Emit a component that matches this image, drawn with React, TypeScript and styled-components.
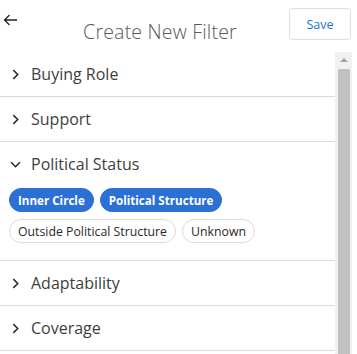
import styled, { createGlobalStyle } from 'styled-components';

const GlobalStyle = createGlobalStyle`
  html, body {
    margin: 0;
    padding: 0;
    background: #ffffff;
    font-family: 'Open Sans', 'Liberation Sans', sans-serif;
    color: #3e3e3c;
  }
`;

interface Section {
  label: string;
  open?: boolean;
  options?: { label: string; selected?: boolean }[];
}

const sections: Section[] = [
  { label: 'Buying Role' },
  { label: 'Support' },
  {
    label: 'Political Status',
    open: true,
    options: [
      { label: 'Inner Circle', selected: true },
      { label: 'Political Structure', selected: true },
      { label: 'Outside Political Structure' },
      { label: 'Unknown' },
    ],
  },
  { label: 'Adaptability' },
  { label: 'Coverage' },
];

function Chevron({ open }: { open?: boolean }) {
  return (
    <ChevronSvg viewBox="0 0 10 10" $open={open}>
      <path d="M3 1 L7 5 L3 9" fill="none" stroke="#2b2826" strokeWidth="1.4" />
    </ChevronSvg>
  );
}

export default function App() {
  return (
    <Panel>
      <GlobalStyle />
      <Header>
        <BackButton aria-label="Back">
          <svg width="15" height="12" viewBox="0 0 15 12">
            <path d="M14 6 H1.5 M6.5 1 L1.5 6 L6.5 11" fill="none" stroke="#222" strokeWidth="1.3" />
          </svg>
        </BackButton>
        <Title>Create New Filter</Title>
        <SaveButton>Save</SaveButton>
      </Header>
      <Body>
        <List>
          {sections.map((s) => (
            <Row key={s.label}>
              <RowHead>
                <Chevron open={s.open} />
                <RowLabel>{s.label}</RowLabel>
              </RowHead>
              {s.open && s.options && (
                <Chips>
                  {s.options.map((o) => (
                    <Chip key={o.label} $selected={o.selected}>
                      {o.label}
                    </Chip>
                  ))}
                </Chips>
              )}
            </Row>
          ))}
        </List>
        <ScrollTrack>
          <ScrollArrow />
          <ScrollThumb />
        </ScrollTrack>
      </Body>
    </Panel>
  );
}

const Panel = styled.div`
  width: 357px;
  height: 354px;
  display: flex;
  flex-direction: column;
  overflow: hidden;
  background: #fff;
`;

const Header = styled.div`
  display: flex;
  align-items: center;
  height: 52px;
  padding: 0 6px 0 3px;
  flex-shrink: 0;
`;

const BackButton = styled.button`
  display: flex;
  align-items: center;
  border: none;
  background: none;
  padding: 0;
  margin: -12px 0 0 0;
  width: 28px;
  cursor: pointer;
`;

const Title = styled.div`
  flex: 1;
  text-align: center;
  font-size: 19.5px;
  font-weight: 300;
  color: #54575b;
  margin-top: 10px;
  letter-spacing: 0.2px;
`;

const SaveButton = styled.button`
  width: 62px;
  height: 32px;
  border: 1px solid #d8dde6;
  border-radius: 4px;
  background: #fff;
  color: #1b74d8;
  font-family: 'Open Sans', 'Liberation Sans', sans-serif;
  font-size: 12.5px;
  padding: 0;
  margin-top: -4px;
`;

const Body = styled.div`
  flex: 1;
  display: flex;
  min-height: 0;
  padding-right: 5px;
`;

const List = styled.div`
  flex: 1;
  display: flex;
  flex-direction: column;
`;

const Row = styled.div`
  border-bottom: 1px solid #dddbda;
  flex-shrink: 0;
`;

const RowHead = styled.div`
  display: flex;
  align-items: center;
  height: 44px;
  padding-left: 10px;
`;

const ChevronSvg = styled.svg<{ $open?: boolean }>`
  width: 11px;
  height: 11px;
  margin-right: 10px;
  transform: ${(p) => (p.$open ? 'rotate(90deg)' : 'none')};
`;

const RowLabel = styled.span`
  font-size: 16px;
  color: #3e3e3c;
`;

const Chips = styled.div`
  display: flex;
  flex-wrap: wrap;
  gap: 7px 6px;
  padding: 2px 0 17px 9px;
`;

const Chip = styled.span<{ $selected?: boolean }>`
  display: inline-flex;
  align-items: center;
  height: 24px;
  box-sizing: border-box;
  padding: 0 ${(p) => (p.$selected ? 8 : 8)}px;
  border-radius: 12px;
  font-size: ${(p) => (p.$selected ? 11.6 : 12.3)}px;
  font-weight: ${(p) => (p.$selected ? 700 : 400)};
  color: ${(p) => (p.$selected ? '#fff' : '#2b2826')};
  background: ${(p) => (p.$selected ? '#2c6fd5' : '#fff')};
  border: 1px solid ${(p) => (p.$selected ? '#2c6fd5' : '#dddbda')};
`;

const ScrollTrack = styled.div`
  width: 17px;
  background: #f1f1f1;
  display: flex;
  flex-direction: column;
  align-items: center;
`;

const ScrollArrow = styled.div`
  margin-top: 6px;
  width: 0;
  height: 0;
  border-left: 4px solid transparent;
  border-right: 4px solid transparent;
  border-bottom: 4px solid #a3a3a3;
`;

const ScrollThumb = styled.div`
  margin-top: 7px;
  width: 12px;
  flex: 1;
  background: #c1c1c1;
`;
